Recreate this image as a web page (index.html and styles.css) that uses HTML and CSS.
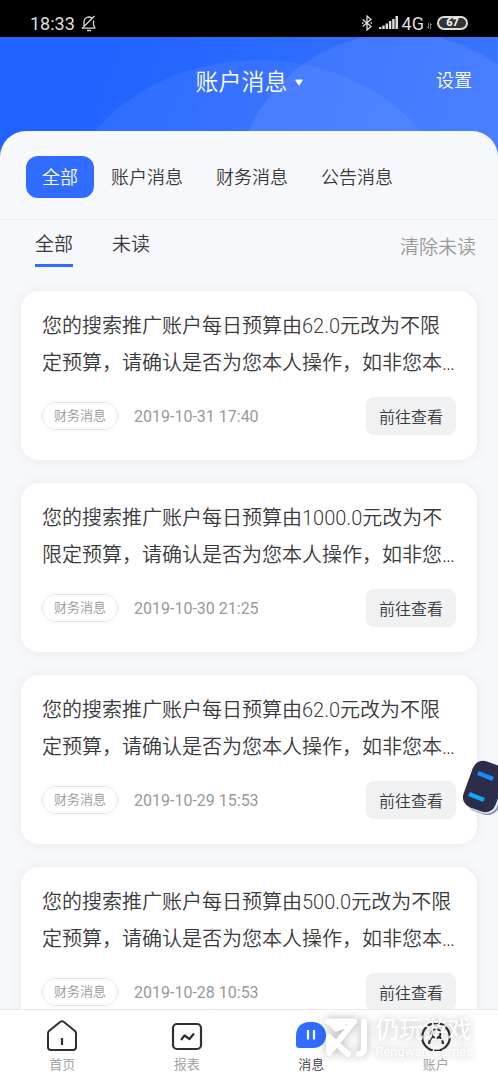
FILE: index.html
```
<!DOCTYPE html>
<html lang="zh-CN">
<head>
<meta charset="utf-8">
<meta name="viewport" content="width=device-width, initial-scale=1">
<title>账户消息</title>
<link rel="stylesheet" href="styles.css">
</head>
<body>
<div class="app">
  <div class="status">
    <span class="status-time">18:33</span>
    <svg class="bell" width="16" height="17" viewBox="0 0 16 17" fill="none" stroke="#d8d8d8" stroke-width="1.3"><path d="M1 13.2h13.5M3 12V7c0-3 2-5 5-5 1 0 2 .3 3 1M12.5 5.500v4.500l1.500 3M1 13.500L13.500 1M6 15.500h4"/></svg>
    <div class="status-right">
      <svg width="10" height="16" viewBox="0 0 10 16" fill="none" stroke="#dedede" stroke-width="1.3"><path d="M.7 4.500L9 11.500 5 15V1l4 3.500L.7 11.500M0 8h1.500M8.500 8H10"/></svg>
      <svg class="signal" width="19" height="14" viewBox="0 0 19 14" fill="#dedede"><path d="M0 13v-2h2.400v2zM3.300 13V9.500h2.400V13zM6.600 13V7.500H9V13zM9.900 13V5h2.400v8zM13.200 13V3h2.400v10zM16.500 13V0H19v13z"/></svg>
      <span class="network">4G</span>
      <svg class="traffic" width="5" height="6" viewBox="0 0 5 6" stroke="#777" fill="none"><path d="M1.500 0v5.500L0 4M3.500 6V.5L5 2"/></svg>
      <span class="battery">67</span>
    </div>
  </div>

  <header class="header">
    <svg class="header-art" viewBox="0 0 498 120" preserveAspectRatio="none"><ellipse cx="258" cy="184" rx="196" ry="161" fill="#fff" fill-opacity=".06"/><circle cx="400" cy="162" r="166" fill="#fff" fill-opacity=".08"/></svg>
    <button class="title" type="button">账户消息<svg width="8" height="7" viewBox="0 0 8 7" fill="#fff"><path d="M1 .5h6q1 0 .5 1L4.600 6q-.6.800-1.200 0L.5 1.500Q0 .5 1 .5z"/></svg></button>
    <button class="settings" type="button">设置</button>
  </header>

  <main class="sheet">
    <nav class="categories">
      <button class="category category-active" type="button">全部</button>
      <button class="category" type="button">账户消息</button>
      <button class="category" type="button">财务消息</button>
      <button class="category" type="button">公告消息</button>
    </nav>
    <div class="filters">
      <button class="filter filter-active" type="button">全部</button>
      <button class="filter" type="button">未读</button>
      <button class="clear" type="button">清除未读</button>
    </div>
    <section class="list">
      <article class="card">
        <p class="message">您的搜索推广账户每日预算由62.0元改为不限定预算，请确认是否为您本人操作，如非您本…</p>
        <div class="meta"><span class="tag">财务消息</span><time class="date">2019-10-31 17:40</time><button class="view" type="button">前往查看</button></div>
      </article>
      <article class="card">
        <p class="message">您的搜索推广账户每日预算由1000.0元改为不限定预算，请确认是否为您本人操作，如非您…</p>
        <div class="meta"><span class="tag">财务消息</span><time class="date">2019-10-30 21:25</time><button class="view" type="button">前往查看</button></div>
      </article>
      <article class="card">
        <p class="message">您的搜索推广账户每日预算由62.0元改为不限定预算，请确认是否为您本人操作，如非您本…</p>
        <div class="meta"><span class="tag">财务消息</span><time class="date">2019-10-29 15:53</time><button class="view" type="button">前往查看</button></div>
      </article>
      <article class="card">
        <p class="message">您的搜索推广账户每日预算由500.0元改为不限定预算，请确认是否为您本人操作，如非您本…</p>
        <div class="meta"><span class="tag">财务消息</span><time class="date">2019-10-28 10:53</time><button class="view" type="button">前往查看</button></div>
      </article>
    </section>
  </main>

  <nav class="tabbar">
    <a class="tab" href="#home">
      <svg width="32" height="32" viewBox="0 0 32 32" fill="none" stroke="#303033" stroke-width="2" stroke-linejoin="round" stroke-linecap="round"><path d="M2 14.500Q2 13 3 12L14 3q2-1.600 4 0l11 9q1 1 1 2.500V28q0 3-3 3H5q-3 0-3-3z"/><path d="M16 19v7" stroke-linecap="butt" stroke-width="2.200"/></svg>
      <span>首页</span>
    </a>
    <a class="tab" href="#report">
      <svg width="32" height="32" viewBox="0 0 32 32" fill="none" stroke="#303033" stroke-width="2.200" stroke-linejoin="round"><rect x="2" y="5" width="28" height="25" rx="4"/><path d="M10 21l3.500-4.500 5 3.500 4.500-5.500"/></svg>
      <span>报表</span>
    </a>
    <a class="tab tab-active" href="#messages">
      <svg width="32" height="32" viewBox="0 0 32 32"><path d="M1 16.500C1 8 7 3 14 3h4c7 0 13 6 13 13s-5 13-13 13H4q-3 0-3-3z" fill="#2f6cff"/><path d="M13 11v9.500M19 11v9.500" stroke="#fff" stroke-width="2.200"/></svg>
      <span>消息</span>
    </a>
    <a class="tab" href="#account">
      <svg width="32" height="32" viewBox="0 0 32 32" fill="none" stroke="#303033" stroke-width="2.200"><circle cx="16" cy="18" r="13.800"/><circle cx="16" cy="14.500" r="4.500"/><path d="M9 25q.5-6 4.500-7M23 25q-.5-6-4.500-7"/></svg>
      <span>账户</span>
    </a>
  </nav>

  <svg class="assistant" width="38" height="56" viewBox="0 0 38 56"><g transform="rotate(20 24 28)"><rect x="11" y="5" width="34" height="49" rx="12" fill="#8d96b0"/><rect x="9" y="4" width="34" height="49" rx="12" fill="#e8ecf5"/><rect x="7" y="3" width="34" height="49" rx="11" fill="#2c2d49"/></g><path d="M18 14l15 6" stroke="#168cff" stroke-width="4.500"/><path d="M9 35l15 6" stroke="#12a5ff" stroke-width="4.500"/></svg>

  <div class="watermark">
    <svg width="44" height="42" viewBox="0 0 44 42" fill="none" stroke="#fff" stroke-width="6" stroke-linejoin="round" stroke-linecap="round"><path d="M4 4.500h26L5 36V20l19 17"/><path d="M4 4.500l8 8 9-3z" fill="#fff" stroke-width="4"/><path d="M40 4.500v26q0 6-5 6.500"/></svg>
    <div class="watermark-words"><span class="watermark-name">仍玩游戏</span><span class="watermark-latin">Rengwan Games</span></div>
  </div>
</div>
</body>
</html>
```
FILE: styles.css
```
* { box-sizing: border-box; }
body { margin: 0; font-family: Roboto, "Noto Sans CJK SC", sans-serif; font-weight: 350; color: #3a3a3d; background: #f6f8fb; }
button { margin: 0; padding: 0; border: 0; background: none; font: inherit; color: inherit; white-space: nowrap; cursor: pointer; }
a { color: inherit; text-decoration: none; }
svg { display: block; flex: none; }

.app { position: relative; display: flex; flex-direction: column; height: 100vh; overflow: hidden; }

.status { display: flex; align-items: center; flex: none; height: 37px; padding: 9px 30px 0; background: #000; color: #dedede; font-size: 18px; font-weight: 400; }
.bell { margin-left: 6px; }
.status-right { display: flex; align-items: center; margin-left: auto; }
.signal { margin: 0 4px 0 7px; }
.traffic { margin: 6px 5px 0 3px; }
.battery { width: 31px; height: 14px; border: 2px solid #dedede; border-radius: 7px; background: #333; color: #fff; font-size: 11px; font-weight: 700; line-height: 10px; text-align: center; }

.header { position: relative; display: grid; grid-template-columns: 1fr auto 1fr; align-items: center; flex: none; height: 120px; padding: 0 26px 32px; background: linear-gradient(110deg, #2263ff 20%, #3b76ff); color: #fff; }
.header-art { position: absolute; inset: 0; width: 100%; height: 100%; }
.title { position: relative; grid-column: 2; display: flex; align-items: center; gap: 7px; padding-top: 3px; font-size: 23px; line-height: 34px; }
.settings { position: relative; justify-self: end; font-size: 18px; line-height: 28px; }

.sheet { position: relative; display: flex; flex-direction: column; flex: 1; min-height: 0; margin-top: -26px; border-radius: 26px 26px 0 0; background: #f6f8fb; }
.categories { display: flex; gap: 1px; flex: none; padding: 25px 26px 21px; border-bottom: 1px solid #eceef0; }
.category { height: 42px; padding: 0 16px 2px; border-radius: 12px; font-size: 18px; }
.category-active { background: #2f6cff; color: #fff; }
.filters { display: flex; align-items: flex-start; gap: 39px; flex: none; padding: 7px 22px 0 35px; font-size: 19px; line-height: 32px; }
.filter { height: 40px; padding-bottom: 1px; border-bottom: 3px solid transparent; }
.filter-active { border-color: #2f6cff; }
.clear { height: 41px; margin-left: auto; color: #999; }

.list { display: flex; flex-direction: column; gap: 23px; flex: 1; min-height: 0; overflow: hidden; padding: 23px 21px 0; }
.card { flex: none; padding: 17px 19px 25px 21px; border-radius: 18px; background: #fff; box-shadow: 0 0 12px rgba(60, 70, 90, .08); }
.message { margin: 0 0 15px; font-size: 20px; line-height: 37px; }
.meta { display: flex; align-items: center; color: #999; font-size: 16px; }
.tag { padding: 0 11px; border: 1px solid #e6e6e8; border-radius: 14px; font-size: 13px; line-height: 26px; }
.date { margin-left: 16px; font-weight: 400; }
.view { height: 38px; margin: 0 2px 0 auto; padding: 0 13px; border-radius: 8px; background: #f0f1f3; color: #3a3a3d; font-size: 16px; }

.tabbar { position: relative; display: grid; grid-template-columns: repeat(4, 1fr); flex: none; height: 71px; padding-top: 9px; border-top: 1px solid #e6e8eb; background: #fff; }
.tab { display: flex; flex-direction: column; align-items: center; gap: 7px; color: #999; font-size: 13px; line-height: 14px; }
.tab-active { color: #3a3a3d; }

.assistant { position: absolute; right: 0; top: 759px; }
.watermark { position: absolute; right: 25px; bottom: 21px; display: flex; align-items: center; gap: 7px; color: #fff; pointer-events: none; opacity: .9; filter: drop-shadow(0 0 5px rgba(0, 0, 0, .35)); }
.watermark-words { display: flex; flex-direction: column; }
.watermark-name { font-size: 24px; font-weight: 400; line-height: 29px; }
.watermark-latin { font-size: 13px; font-weight: 400; line-height: 14px; }
```
